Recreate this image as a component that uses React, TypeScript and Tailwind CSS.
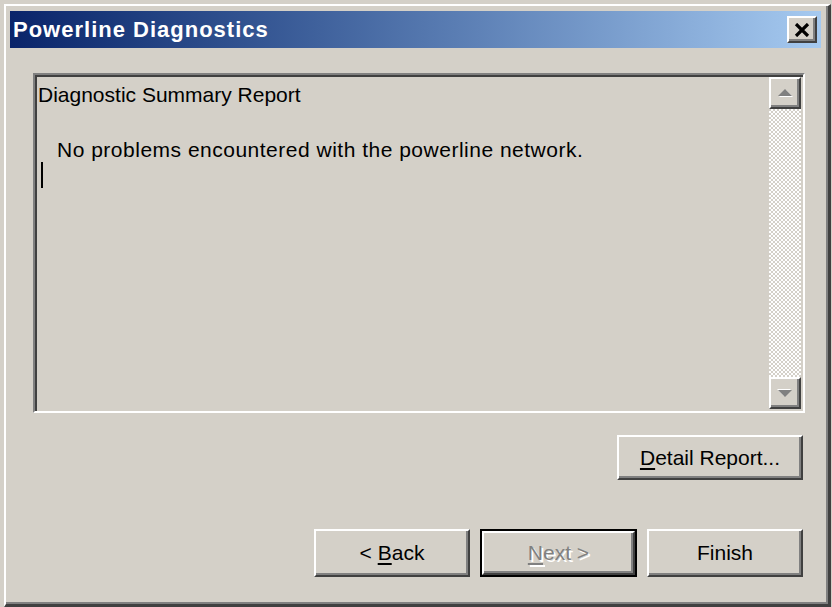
const font = "font-['Liberation_Sans',Arial,sans-serif]";

const raised =
  "border-2 border-t-white border-l-white border-r-[#404040] border-b-[#404040] shadow-[inset_-2px_-2px_0_#808080] bg-[#d4d0c8]";

function Button({
  children,
  width,
  isDefault = false,
}: {
  children: React.ReactNode;
  width: string;
  isDefault?: boolean;
}) {
  if (isDefault) {
    return (
      <div className={`${width} h-[48px] border-2 border-black flex`}>
        <div className={`${raised} flex-1 flex items-center justify-center`}>{children}</div>
      </div>
    );
  }
  return (
    <div className={`${width} h-[48px] ${raised} flex items-center justify-center`}>{children}</div>
  );
}

function ScrollArrow({ down = false }: { down?: boolean }) {
  return (
    <div className={`w-[32px] h-[32px] ${raised} flex items-center justify-center`}>
      <svg width="16" height="10" viewBox="0 0 16 10" className={down ? "rotate-180" : ""}>
        <polygon points="8,1 15,8 1,8" fill="#ffffff" transform="translate(1,1)" />
        <polygon points="8,1 15,8 1,8" fill="#808080" />
      </svg>
    </div>
  );
}

export default function App() {
  return (
    <div className={`w-[832px] h-[607px] bg-[#d4d0c8] pl-[4px] pt-[4px] overflow-hidden ${font} text-[21px] text-black`}>
      {/* window frame */}
      <div className="w-[827px] h-[603px] border-l-2 border-t-2 border-white border-r-[3px] border-b-[3px] border-r-[#404040] border-b-[#404040] shadow-[inset_-2px_-2px_0_#808080] flex flex-col">
        {/* title bar */}
        <div className="ml-[4px] mt-[5px] w-[811px] h-[37px] bg-gradient-to-r from-[#0a246a] to-[#a6caf0] flex items-center justify-between pl-[3px] pr-[4px]">
          <span className="text-white font-bold text-[22px] leading-none tracking-[1px]">Powerline Diagnostics</span>
          <div className={`w-[30px] h-[27px] ${raised} flex items-center justify-center`}>
            <svg width="16" height="14" viewBox="0 0 16 14">
              <path d="M2 1 L14 13 M14 1 L2 13" stroke="#000" strokeWidth="3.2" />
            </svg>
          </div>
        </div>

        {/* report box */}
        <div className="ml-[27px] mt-[25px] w-[772px] h-[340px] border-2 border-t-[#808080] border-l-[#808080] border-r-white border-b-white shadow-[inset_2px_2px_0_#404040,inset_-2px_-2px_0_#d4d0c8] p-[2px] flex">
          <div className="flex-1 flex flex-col pl-[1px] pt-[6px] leading-[24px]">
            <div>Diagnostic Summary Report</div>
            <div className="mt-[31px] pl-[19px] tracking-[0.5px]">No problems encountered with the powerline network.</div>
            <div className="ml-[3px] w-[2px] h-[26px] bg-black" />
          </div>
          <div className="w-[32px] flex flex-col">
            <ScrollArrow />
            <div className="flex-1 bg-[repeating-conic-gradient(#ffffff_0%_25%,#d4d0c8_0%_50%)] bg-[length:4px_4px]" />
            <ScrollArrow down />
          </div>
        </div>

        {/* detail button */}
        <div className="ml-[611px] mt-[22px]">
          <div className={`w-[186px] h-[45px] ${raised} flex items-center justify-center`}>
            <span>
              <span className="underline underline-offset-[3px]">D</span>etail Report...
            </span>
          </div>
        </div>

        {/* wizard buttons */}
        <div className="ml-[308px] mt-[49px] flex gap-[10px]">
          <Button width="w-[156px]">
            <span>
              &lt; <span className="underline underline-offset-[3px]">B</span>ack
            </span>
          </Button>
          <Button width="w-[157px]" isDefault>
            <span className="text-[#808080] [text-shadow:2px_2px_0_#ffffff]">
              <span className="underline underline-offset-[3px]">N</span>ext &gt;
            </span>
          </Button>
          <Button width="w-[156px]">
            <span>Finish</span>
          </Button>
        </div>
      </div>
    </div>
  );
}
